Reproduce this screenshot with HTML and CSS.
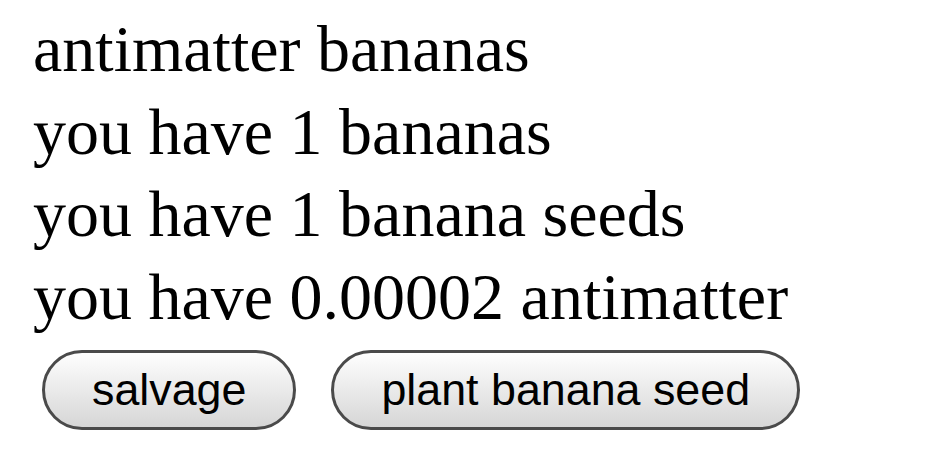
FILE: index.html
```html
<!DOCTYPE html>
<html>
<head>
<meta charset="utf-8">
<link rel="stylesheet" href="styles.css">
</head>
<body>
<div class="page">
  <div class="line">antimatter bananas</div>
  <div class="line">you have 1 bananas</div>
  <div class="line">you have 1 banana seeds</div>
  <div class="line">you have 0.00002 antimatter</div>
  <div class="actions">
    <button class="btn">salvage</button>
    <button class="btn">plant banana seed</button>
  </div>
</div>
</body>
</html>
```

FILE: styles.css
```css
html, body {
  margin: 0;
  padding: 0;
  background: #ffffff;
}
.page {
  padding: 8px 0 0 33px;
  font-family: "Liberation Serif", "Times New Roman", serif;
  color: #000;
}
.line {
  font-size: 66px;
  line-height: 82.7px;
  white-space: nowrap;
}
.actions {
  display: flex;
  gap: 35px;
  margin-top: 11px;
  padding-left: 9px;
}
.btn {
  box-sizing: border-box;
  height: 80px;
  padding: 0 47px;
  border: 3px solid #4a4a4a;
  border-radius: 40px;
  background: linear-gradient(#fefefe, #d6d6d6);
  font-family: "Liberation Sans", Arial, sans-serif;
  font-size: 44.8px;
  color: #000;
  line-height: 1;
  margin: 0;
}
```
